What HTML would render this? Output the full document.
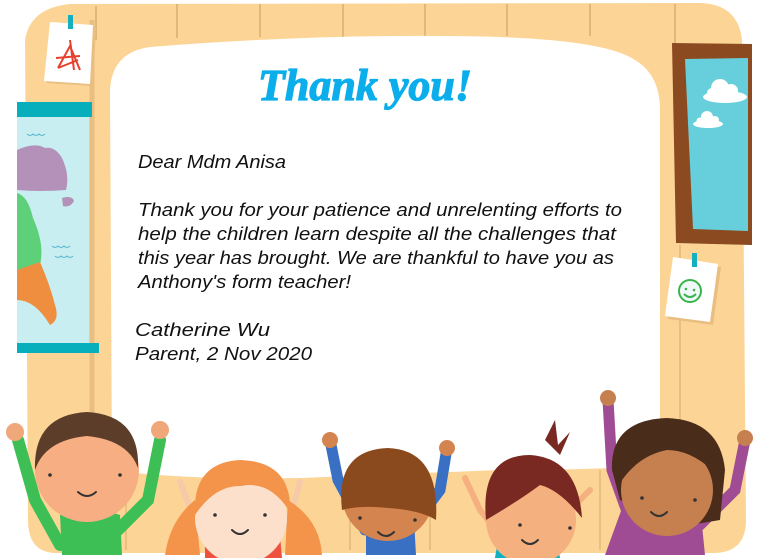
<!DOCTYPE html>
<html><head><meta charset="utf-8"><style>
html,body{margin:0;padding:0;background:#fff;}
svg{display:block}
</style></head><body>
<svg width="758" height="558" viewBox="0 0 758 558" xmlns="http://www.w3.org/2000/svg">
<path d="M70 4 L700 3 Q738 4 742 40 L746 520 Q746 552 715 553 L55 553 Q28 552 28 520 L25 40 Q30 8 70 4 Z" fill="#FCD596"/>
<g stroke="#E2B878" stroke-width="2">
<line x1="96" y1="6" x2="96" y2="40"/><line x1="177" y1="4" x2="177" y2="38"/><line x1="260" y1="4" x2="260" y2="37"/><line x1="343" y1="4" x2="343" y2="37"/><line x1="425" y1="4" x2="425" y2="36"/><line x1="507" y1="4" x2="507" y2="36"/><line x1="590" y1="4" x2="590" y2="36"/><line x1="675" y1="4" x2="675" y2="45"/>
<line x1="680" y1="245" x2="680" y2="420" stroke-width="1.5"/>
<line x1="126" y1="480" x2="126" y2="550" stroke-width="1.5"/><line x1="208" y1="480" x2="208" y2="550" stroke-width="1.5"/><line x1="350" y1="480" x2="350" y2="550" stroke-width="1.5"/><line x1="430" y1="480" x2="430" y2="550" stroke-width="1.5"/><line x1="520" y1="470" x2="520" y2="550" stroke-width="1.5"/><line x1="600" y1="470" x2="600" y2="550" stroke-width="1.5"/>
</g>
<path d="M92 20 L92 470" stroke="#E9BE80" stroke-width="5"/>
<path d="M150 47 Q300 35 440 36 Q600 36 635 60 Q660 75 660 110 L660 465 Q600 470 500 470 L300 478 Q180 480 112 470 L110 90 Q112 52 150 47 Z" fill="#fff"/>
<path d="M672 43 L752 44 L752 245 L676 243 Z" fill="#8B4A20"/>
<path d="M685 59 L748 58 L748 231 L693 229 Z" fill="#67CFDB"/>
<g fill="#fff">
<ellipse cx="725" cy="97" rx="22" ry="6"/><circle cx="720" cy="88" r="9"/><circle cx="731" cy="91" r="7"/><circle cx="712" cy="93" r="5"/>
<ellipse cx="708" cy="124" rx="15" ry="4"/><circle cx="707" cy="117" r="6"/><circle cx="715" cy="120" r="4"/><circle cx="700" cy="121" r="3.5"/>
</g>
<path d="M673 257 L718 264 L710 322 L665 316 Z" fill="#E9BE80" transform="translate(3,3)"/>
<path d="M673 257 L718 264 L710 322 L665 316 Z" fill="#fff"/>
<rect x="692" y="253" width="5" height="14" fill="#14AFC0"/>
<circle cx="690" cy="291" r="11" fill="#F1F8FA" stroke="#38B54A" stroke-width="2"/>
<circle cx="686" cy="289" r="1.3" fill="#38B54A"/><circle cx="694" cy="290" r="1.3" fill="#38B54A"/>
<path d="M684 294 Q690 300 696 294" fill="none" stroke="#38B54A" stroke-width="2"/>
<path d="M50 22 L93 25 L90 84 L44 81 Z" fill="#E9BE80" transform="translate(3,2)"/>
<path d="M50 22 L93 25 L90 84 L44 81 Z" fill="#fff"/>
<rect x="68" y="15" width="5" height="14" fill="#14AFC0"/>
<path d="M70 40 L74 70 M56 58 L80 56 M58 68 L70 46 L80 70 M58 68 L78 60" fill="none" stroke="#E8402E" stroke-width="2"/>
<rect x="17" y="117" width="72" height="232" fill="#C8EEF2"/>
<path d="M17 150 Q35 142 45 148 Q55 146 62 158 Q70 175 66 190 Q40 192 17 190 Z" fill="#B391B8"/>
<path d="M62 198 Q72 195 74 201 Q70 208 63 206 Z" fill="#B391B8"/>
<path d="M17 193 Q28 196 33 218 Q45 245 40 265 L17 270 Z" fill="#5FD07A"/>
<path d="M17 270 L40 262 Q50 285 55 305 Q60 320 50 325 Q35 300 17 300 Z" fill="#EE8E3E"/>
<g fill="none" stroke="#5BB7CF" stroke-width="1"><path d="M27 134 q3 3 6 0 q3 3 6 0 q3 3 6 0"/><path d="M52 246 q3 3 6 0 q3 3 6 0 q3 3 6 0"/><path d="M55 256 q3 3 6 0 q3 3 6 0 q3 3 6 0"/></g>
<rect x="17" y="102" width="75" height="15" fill="#07AFBC"/>
<rect x="17" y="343" width="82" height="10" fill="#07AFBC"/>
<text x="365" y="100" text-anchor="middle" font-family="Liberation Serif, serif" font-style="italic" font-weight="bold" font-size="44" fill="#0BAEEA" stroke="#0BAEEA" stroke-width="1.2">Thank you!</text>
<g font-family="Liberation Sans, sans-serif" font-style="italic" font-size="18" fill="#111" lengthAdjust="spacingAndGlyphs">
<text x="138" y="168" textLength="148" lengthAdjust="spacingAndGlyphs">Dear Mdm Anisa</text>
<text x="138" y="216" textLength="484" lengthAdjust="spacingAndGlyphs">Thank you for your patience and unrelenting efforts to</text>
<text x="138" y="240" textLength="478" lengthAdjust="spacingAndGlyphs">help the children learn despite all the challenges that</text>
<text x="138" y="264" textLength="476" lengthAdjust="spacingAndGlyphs">this year has brought. We are thankful to have you as</text>
<text x="138" y="288" textLength="213" lengthAdjust="spacingAndGlyphs">Anthony's form teacher!</text>
<text x="135" y="336" textLength="135" lengthAdjust="spacingAndGlyphs">Catherine Wu</text>
<text x="135" y="360" textLength="177" lengthAdjust="spacingAndGlyphs">Parent, 2 Nov 2020</text>
</g>
<g stroke-linecap="round">
<path d="M18 440 L35 500 L60 545" stroke="#3DBF55" stroke-width="12" fill="none"/>
<path d="M160 440 L148 500 L118 530" stroke="#3DBF55" stroke-width="12" fill="none"/>
<path d="M60 515 Q90 505 120 515 L122 555 L62 555 Z" fill="#3DBF55"/>
<circle cx="15" cy="432" r="9" fill="#F0A77A"/><circle cx="160" cy="430" r="9" fill="#F0A77A"/>
<circle cx="87" cy="470" r="52" fill="#F6AE82"/>
<path d="M35 470 Q33 415 87 412 Q140 415 138 468 Q128 440 87 436 Q45 440 35 470Z" fill="#5C3D2A"/>
<circle cx="50" cy="475" r="1.8" fill="#333"/><circle cx="120" cy="475" r="1.8" fill="#333"/>
<path d="M78 492 Q87 500 96 492" stroke="#333" stroke-width="2" fill="none"/>
<path d="M180 482 L195 520 L210 540" stroke="#F6C9A8" stroke-width="6" fill="none"/>
<path d="M300 482 L290 520 L270 540" stroke="#F6C9A8" stroke-width="6" fill="none"/>
<path d="M205 540 Q240 525 280 535 L282 558 L205 558 Z" fill="#EE523F"/>
<path d="M195 500 Q170 520 165 555 L200 555 Z M288 500 Q320 520 322 555 L285 555Z" fill="#F4934A"/>
<circle cx="241" cy="518" r="46" fill="#FDE0CB"/>
<path d="M195 515 Q192 462 241 460 Q292 462 290 512 Q270 480 241 486 Q215 485 195 515Z" fill="#F4934A"/>
<circle cx="215" cy="515" r="1.8" fill="#333"/><circle cx="265" cy="515" r="1.8" fill="#333"/>
<path d="M232 530 Q240 538 248 530" stroke="#333" stroke-width="2" fill="none"/>
<path d="M330 440 L338 480 L365 530" stroke="#3A70C4" stroke-width="11" fill="none"/>
<path d="M447 448 L440 490 L410 530" stroke="#3A70C4" stroke-width="11" fill="none"/>
<path d="M366 520 Q390 510 414 520 L416 555 L366 555 Z" fill="#3A70C4"/>
<circle cx="330" cy="440" r="8" fill="#D4854F"/><circle cx="447" cy="448" r="8" fill="#D4854F"/>
<circle cx="388" cy="495" r="46" fill="#D4854F"/>
<path d="M342 510 Q335 450 388 448 Q440 450 436 520 Q420 510 388 508 Q360 505 342 510Z" fill="#8B4A1E"/>
<circle cx="360" cy="518" r="1.8" fill="#333"/><circle cx="415" cy="520" r="1.8" fill="#333"/>
<path d="M378 532 Q386 540 394 532" stroke="#333" stroke-width="2" fill="none"/>
<path d="M465 478 L480 510 L500 535" stroke="#F5B080" stroke-width="6" fill="none"/>
<path d="M590 490 L570 510 L555 525" stroke="#F5B080" stroke-width="6" fill="none"/>
<path d="M490 585 L500 530 Q530 522 555 530 L560 558 L490 558Z" fill="#10B0C0"/>
<circle cx="531" cy="520" r="45" fill="#F5B080"/>
<path d="M486 520 Q480 455 530 455 Q578 458 582 518 Q560 490 540 485 Q520 500 486 520Z" fill="#7A2922"/>
<path d="M545 440 L555 420 L558 445 L570 432 L560 455Z" fill="#7A2922"/>
<circle cx="520" cy="525" r="1.8" fill="#333"/><circle cx="570" cy="528" r="1.8" fill="#333"/>
<path d="M522 540 Q530 548 538 540" stroke="#333" stroke-width="2" fill="none"/>
<path d="M608 400 L612 470 L630 520" stroke="#A04C94" stroke-width="11" fill="none"/>
<path d="M745 440 L735 490 L700 525" stroke="#A04C94" stroke-width="11" fill="none"/>
<path d="M625 500 Q660 490 700 505 L705 555 L605 555Z" fill="#A04C94"/>
<circle cx="608" cy="398" r="8" fill="#C68050"/><circle cx="745" cy="438" r="8" fill="#C68050"/>
<path d="M612 470 Q610 420 667 418 Q720 420 725 470 L720 520 L690 525 L620 500 Z" fill="#4A2C1A"/>
<circle cx="667" cy="490" r="46" fill="#C68050"/>
<path d="M622 480 Q625 430 667 430 Q712 432 712 470 Q690 450 667 450 Q640 455 622 480Z" fill="#4A2C1A"/>
<circle cx="642" cy="498" r="1.8" fill="#333"/><circle cx="695" cy="500" r="1.8" fill="#333"/>
<path d="M651 512 Q659 520 667 512" stroke="#333" stroke-width="2" fill="none"/>
</g>
</svg>
</body></html>
